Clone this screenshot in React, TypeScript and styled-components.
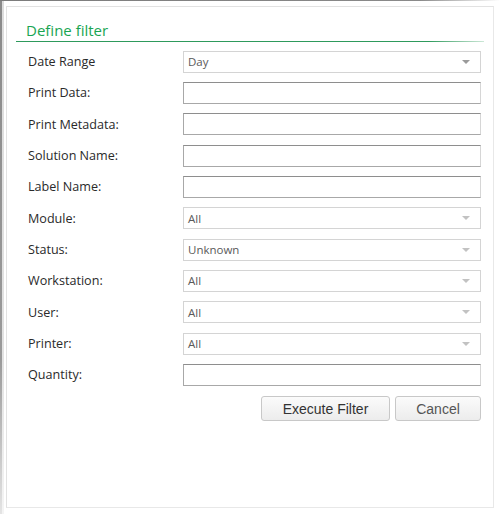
import React from "react"
import styled, { createGlobalStyle } from "styled-components"

const Global = createGlobalStyle`
  html, body {
    margin: 0;
    padding: 0;
    background: #fff;
  }
  body {
    width: 500px;
    height: 514px;
    overflow: hidden;
  }
`

const Frame = styled.div`
  position: relative;
  box-sizing: border-box;
  width: 500px;
  height: 514px;
  padding: 6px 6px 6px 6px;
  background-color: #fff;
  background-image: linear-gradient(to right, #7c7c7c 0%, #8a8a8a 84%, #ffffff 100%),
    linear-gradient(to bottom, #8a8a8a 0%, #9a9a9a 70%, #e4e4e4 100%),
    linear-gradient(to bottom, #dcdcdc 0%, #e2e2e2 70%, #f4f4f4 100%);
  background-size: 100% 1px, 2px 100%, 2px 100%;
  background-position: 0 0, 0 0, 2px 0;
  background-repeat: no-repeat;
`

const Panel = styled.div`
  box-sizing: border-box;
  height: 100%;
  border: 1px solid #e8e8e8;
  border-top-color: #e2e2e2;
  border-left-color: #e2e2e2;
  padding: 0 12px 0 21px;
`

const Heading = styled.div`
  margin: 13px -3px 8px -12px;
  padding-left: 10px;
  height: 21px;
  line-height: 21px;
  border-bottom: 1px solid transparent;
  border-image: linear-gradient(to right, #2e9a5c 0%, #2e9a5c 88%, #cfe9d9 100%) 1;
  color: #19a552;
  font-family: "Open Sans", "Noto Sans", sans-serif;
  font-size: 15px;
`

const Form = styled.div`
  display: flex;
  flex-direction: column;
  gap: 9.35px;
`

const Row = styled.div`
  display: grid;
  grid-template-columns: 155px 1fr;
  align-items: center;
  height: 22px;
`

const Label = styled.div`
  font-family: "Open Sans", "Noto Sans", sans-serif;
  font-size: 12.6px;
  color: #2a2a2a;
  line-height: 22px;
  padding-top: 1px;
`

const TextBox = styled.div`
  box-sizing: border-box;
  height: 22px;
  border: 1px solid #a8a8a8;
  border-top-color: #8e8e8e;
  border-right-color: #d6d6d6;
  background: #fff;
`

const Select = styled.div`
  box-sizing: border-box;
  height: 22px;
  display: flex;
  align-items: center;
  justify-content: space-between;
  padding: 0 10px 0 4px;
  border: 1px solid #d4d4d4;
  background: #fff;
  font-family: "Open Sans", "Noto Sans", sans-serif;
  font-size: 11.5px;
  color: #5a5a5a;
`

const Arrow = styled.span<{ $dark?: boolean }>`
  width: 0;
  height: 0;
  border-left: 4px solid transparent;
  border-right: 4px solid transparent;
  border-top: 4px solid ${(p) => (p.$dark ? "#9a9a9a" : "#c2c2c2")};
`

const Buttons = styled.div`
  display: flex;
  justify-content: flex-end;
  gap: 5px;
  margin-top: 11px;
`

const Button = styled.button<{ $w: number; $faded?: boolean }>`
  box-sizing: border-box;
  width: ${(p) => p.$w}px;
  height: 25px;
  border: 1px solid #c8c8c8;
  border-radius: 3px;
  background: linear-gradient(to bottom, #fbfbfb, #ececec);
  font-family: "Liberation Sans", Arial, sans-serif;
  font-size: 14px;
  color: ${(p) => (p.$faded ? "#555" : "#333")};
  padding: 0;
`

type Field = { label: string; kind: "text" | "select"; value?: string; dark?: boolean }

const fields: Field[] = [
  { label: "Date Range", kind: "select", value: "Day", dark: true },
  { label: "Print Data:", kind: "text" },
  { label: "Print Metadata:", kind: "text" },
  { label: "Solution Name:", kind: "text" },
  { label: "Label Name:", kind: "text" },
  { label: "Module:", kind: "select", value: "All" },
  { label: "Status:", kind: "select", value: "Unknown" },
  { label: "Workstation:", kind: "select", value: "All" },
  { label: "User:", kind: "select", value: "All" },
  { label: "Printer:", kind: "select", value: "All" },
  { label: "Quantity:", kind: "text" },
]

const App = () => {
  return (
    <Frame>
      <Global />
      <Panel>
        <Heading>Define filter</Heading>
        <Form>
          {fields.map((f) => (
            <Row key={f.label}>
              <Label>{f.label}</Label>
              {f.kind === "select" ? (
                <Select>
                  <span>{f.value}</span>
                  <Arrow $dark={f.dark} />
                </Select>
              ) : (
                <TextBox />
              )}
            </Row>
          ))}
        </Form>
        <Buttons>
          <Button $w={129}>Execute Filter</Button>
          <Button $w={86} $faded>
            Cancel
          </Button>
        </Buttons>
      </Panel>
    </Frame>
  )
}

export default App
